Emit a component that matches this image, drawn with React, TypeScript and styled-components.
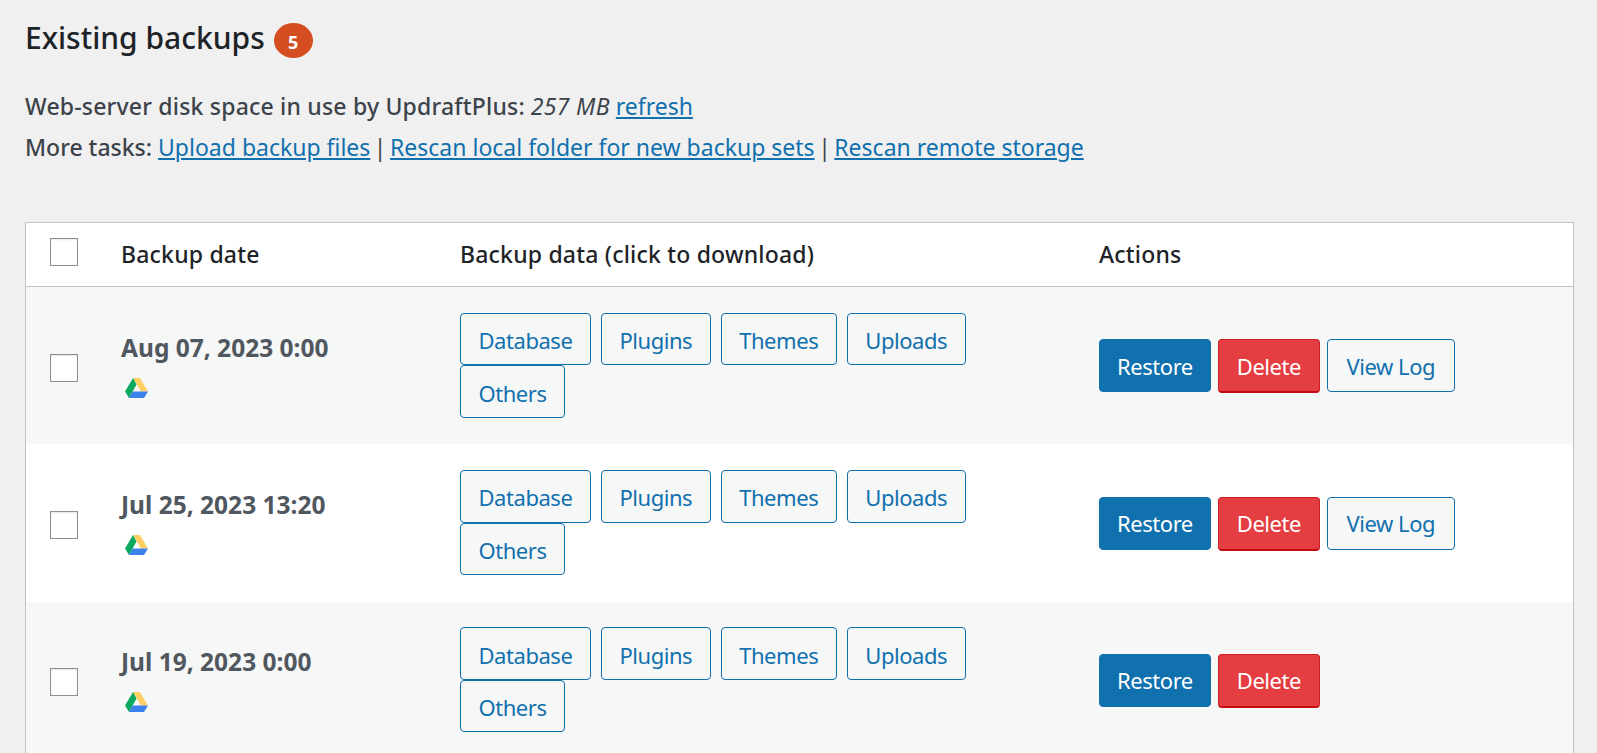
import React from 'react';
import styled, { createGlobalStyle } from 'styled-components';

const GlobalStyle = createGlobalStyle`
  html, body {
    margin: 0;
    height: 100%;
    overflow: hidden;
    background: #f0f0f1;
  }
  body {
    font-family: "Noto Sans", "Open Sans", sans-serif;
    color: #3c434a;
  }
`;

const Page = styled.div`
  padding: 17px 23px 0 25px;
`;

const Heading = styled.h2`
  display: flex;
  align-items: center;
  gap: 9px;
  margin: 0;
  height: 40px;
  font-size: 30px;
  font-weight: 500;
  color: #1d2327;
`;

const CountBadge = styled.span`
  display: flex;
  align-items: center;
  justify-content: center;
  box-sizing: border-box;
  width: 39px;
  height: 35px;
  margin-top: 6px;
  padding-top: 3px;
  border-radius: 50%;
  background: #d54e21;
  color: #fff;
  font-size: 18px;
  font-weight: 700;
`;

const InfoBlock = styled.div`
  margin-top: 29px;
  font-size: 23px;
  font-weight: 500;
  line-height: 41px;
`;

const InfoLine = styled.div`
  white-space: nowrap;
`;

const DiskLabel = styled.span`
  letter-spacing: 0.2px;
`;

const Size = styled.em`
  font-weight: 400;
  letter-spacing: 0.3px;
`;

const Link = styled.a`
  color: #1170ae;
  font-weight: 400;
  text-decoration: underline;
  cursor: pointer;
`;

const Separator = styled.span`
  margin: 0 -2.5px;
  font-weight: 400;
`;

const Table = styled.div`
  margin-top: 54px;
  border: 1px solid #c3c4c7;
  background: #fff;
`;

const Row = styled.div<{ $striped?: boolean }>`
  display: grid;
  grid-template-columns: 71px 339px 639px 1fr;
  align-items: center;
  padding: 25.75px 0 26.5px 24px;
  background: ${(p) => (p.$striped ? '#f6f7f7' : '#fff')};
`;

const HeaderRow = styled(Row)`
  height: 61px;
  padding-top: 0;
  padding-bottom: 2px;
  border-bottom: 1px solid #c3c4c7;
  font-size: 23px;
  font-weight: 500;
  letter-spacing: 0.2px;
  color: #1d2327;
`;

const Checkbox = styled.input.attrs({ type: 'checkbox' })`
  appearance: none;
  display: block;
  width: 28px;
  height: 28px;
  margin: 0;
  border: 1px solid #8c8f94;
  border-radius: 0;
  background: #fff;
  box-shadow: inset 0 1px 2px rgba(0, 0, 0, 0.1);
`;

const HeaderCheckbox = styled(Checkbox)`
  margin-bottom: 4px;
`;

const RowCheckbox = styled(Checkbox)`
  margin-top: 5px;
`;

const DateCell = styled.div`
  display: flex;
  flex-direction: column;
  align-items: flex-start;
  gap: 14px;
`;

const DateText = styled.div`
  font-size: 24.5px;
  line-height: 32px;
  font-weight: 700;
  color: #50575e;
`;

const DriveIcon = styled.svg`
  display: block;
  width: 23px;
  height: 21px;
  margin-left: 4px;
`;

const DataCell = styled.div`
  display: flex;
  flex-wrap: wrap;
  column-gap: 10px;
  max-width: 540px;
`;

const ActionCell = styled.div`
  display: flex;
  gap: 7px;
  margin-top: 2px;
`;

const Button = styled.button`
  box-sizing: border-box;
  height: 52px;
  padding: 0 17.5px;
  border: 1px solid #1170ae;
  border-radius: 4px;
  background: #f6f7f7;
  color: #1170ae;
  font-family: inherit;
  font-size: 22px;
  letter-spacing: -0.45px;
  cursor: pointer;
`;

const DownloadButton = styled(Button)`
  height: 52.5px;
  padding-top: 2px;
`;

const RestoreButton = styled(Button)`
  height: 53px;
  padding: 0 17px;
  background: #1170ae;
  color: #fff;
`;

const DeleteButton = styled(Button)`
  height: 54px;
  padding: 0 18px;
  border-color: #cc1f26;
  border-bottom: 2px solid #c40a12;
  background: #e43d42;
  color: #fff;
`;

const LogButton = styled(Button)`
  height: 53px;
  padding: 0 18.5px;
`;

const GoogleDrive = () => (
  <DriveIcon viewBox="0 0 23 21">
    <polygon points="8,0 15,0 23,13.5 16,13.5" fill="#ffcf63" />
    <polygon points="8,0 11.5,6.5 4,20 0,13.5" fill="#0da960" />
    <polygon points="7.5,13.5 23,13.5 19,20 4,20" fill="#3b82ec" />
  </DriveIcon>
);

interface Backup {
  date: string;
  hasLog: boolean;
}

const backups: Backup[] = [
  { date: 'Aug 07, 2023 0:00', hasLog: true },
  { date: 'Jul 25, 2023 13:20', hasLog: true },
  { date: 'Jul 19, 2023 0:00', hasLog: false },
];

const entities = ['Database', 'Plugins', 'Themes', 'Uploads', 'Others'];

export default function App() {
  return (
    <Page>
      <GlobalStyle />
      <Heading>
        Existing backups <CountBadge>5</CountBadge>
      </Heading>
      <InfoBlock>
        <InfoLine>
          <DiskLabel>Web-server disk space in use by UpdraftPlus:</DiskLabel> <Size>257 MB</Size> <Link>refresh</Link>
        </InfoLine>
        <InfoLine>
          More tasks: <Link>Upload backup files</Link> <Separator>|</Separator>{' '}
          <Link>Rescan local folder for new backup sets</Link> <Separator>|</Separator>{' '}
          <Link>Rescan remote storage</Link>
        </InfoLine>
      </InfoBlock>
      <Table>
        <HeaderRow>
          <HeaderCheckbox />
          <div>Backup date</div>
          <div>Backup data (click to download)</div>
          <div>Actions</div>
        </HeaderRow>
        {backups.map((backup, i) => (
          <Row key={backup.date} $striped={i % 2 === 0}>
            <RowCheckbox />
            <DateCell>
              <DateText>{backup.date}</DateText>
              <GoogleDrive />
            </DateCell>
            <DataCell>
              {entities.map((name) => (
                <DownloadButton key={name}>{name}</DownloadButton>
              ))}
            </DataCell>
            <ActionCell>
              <RestoreButton>Restore</RestoreButton>
              <DeleteButton>Delete</DeleteButton>
              {backup.hasLog && <LogButton>View Log</LogButton>}
            </ActionCell>
          </Row>
        ))}
      </Table>
    </Page>
  );
}
